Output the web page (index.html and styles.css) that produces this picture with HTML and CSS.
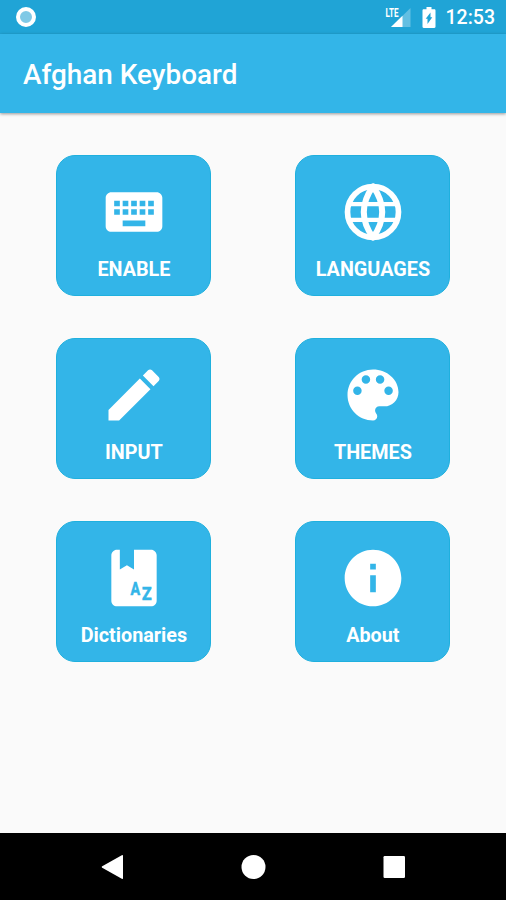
FILE: index.html
```html
<!DOCTYPE html>
<html lang="en">
<head>
    <meta charset="UTF-8">
    <meta name="viewport" content="width=device-width, initial-scale=1.0">
    <title>Afghan Keyboard</title>
    <link rel="stylesheet" href="styles.css">
</head>
<body>
    <!-- Status bar -->
    <div class="status-bar">
        <span class="status-dot"></span>
        <div class="status-right">
            <svg class="signal" width="28" height="24" viewBox="0 0 28 24">
                <path class="faded" d="M26.5 2v19H7z"/>
                <path d="M18.5 9.7V21H7z"/>
                <text x="1.5" y="10.5" textLength="13" lengthAdjust="spacingAndGlyphs">LTE</text>
            </svg>
            <svg class="battery" width="14" height="22" viewBox="0 0 14 22">
                <path d="M4.5 0h5v2.2h2.8c.7 0 1.2.5 1.2 1.2v16.4c0 .7-.5 1.2-1.2 1.2H1.7c-.7 0-1.2-.5-1.2-1.2V3.4c0-.7.5-1.2 1.2-1.2h2.8z"/>
                <path class="bolt" d="M8.5 5.5v4.8h1.8L5.5 17v-5.2H3.7z"/>
            </svg>
            <span class="clock">12:53</span>
        </div>
    </div>

    <header class="app-bar">
        <h1>Afghan Keyboard</h1>
    </header>

    <!-- Menu cards -->
    <main class="menu">
        <a class="card">
            <svg class="icon" viewBox="0 0 24 24">
                <path d="M20 5H4c-1.1 0-1.99.9-1.99 2L2 17c0 1.1.9 2 2 2h16c1.1 0 2-.9 2-2V7c0-1.1-.9-2-2-2zm-9 3h2v2h-2V8zm0 3h2v2h-2v-2zM8 8h2v2H8V8zm0 3h2v2H8v-2zm-1 2H5v-2h2v2zm0-3H5V8h2v2zm9 7H8v-2h8v2zm0-4h-2v-2h2v2zm0-3h-2V8h2v2zm3 3h-2v-2h2v2zm0-3h-2V8h2v2z"/>
            </svg>
            <span class="label">ENABLE</span>
        </a>
        <a class="card">
            <svg class="icon globe" viewBox="0 0 24 24">
                <circle cx="12" cy="12" r="9"/>
                <path class="meridian" d="M12 3Q5.5 12 12 21Q18.5 12 12 3z"/>
                <path d="M3 9.2h18M3 14.8h18"/>
            </svg>
            <span class="label">LANGUAGES</span>
        </a>
        <a class="card">
            <svg class="icon" viewBox="0 0 24 24">
                <path d="M3 17.25V21h3.75L17.81 9.94l-3.75-3.75L3 17.25zM20.71 7.04c.39-.39.39-1.02 0-1.41l-2.34-2.34c-.39-.39-1.02-.39-1.41 0l-1.83 1.83 3.75 3.75 1.83-1.83z"/>
            </svg>
            <span class="label">INPUT</span>
        </a>
        <a class="card">
            <svg class="icon" viewBox="0 0 24 24">
                <path d="M12 3c-4.97 0-9 4.03-9 9s4.03 9 9 9c.83 0 1.5-.67 1.5-1.5 0-.39-.15-.74-.39-1.01-.23-.26-.38-.61-.38-.99 0-.83.67-1.5 1.5-1.5H16c2.76 0 5-2.24 5-5 0-4.42-4.03-8-9-8zm-5.5 9c-.83 0-1.5-.67-1.5-1.5S5.67 9 6.5 9 8 9.67 8 10.5 7.33 12 6.5 12zm3-4C8.67 8 8 7.33 8 6.5S8.67 5 9.5 5s1.5.67 1.5 1.5S10.33 8 9.5 8zm5 0c-.83 0-1.5-.67-1.5-1.5S13.67 5 14.5 5s1.5.67 1.5 1.5S15.33 8 14.5 8zm3 4c-.83 0-1.5-.67-1.5-1.5S16.67 9 17.5 9s1.5.67 1.5 1.5-.67 1.5-1.5 1.5z"/>
            </svg>
            <span class="label">THEMES</span>
        </a>
        <a class="card">
            <svg class="icon" viewBox="0 0 24 24">
                <path d="M6 2h1v7l2.5-1.5L12 9V2h6c1.1 0 2 .9 2 2v16c0 1.1-.9 2-2 2H6c-1.1 0-2-.9-2-2V4c0-1.1.9-2 2-2z"/>
                <text class="letter" x="10.8" y="18" textLength="3.4" lengthAdjust="spacingAndGlyphs">A</text>
                <text class="letter" x="14.8" y="19.9" textLength="3.4" lengthAdjust="spacingAndGlyphs">Z</text>
            </svg>
            <span class="label">Dictionaries</span>
        </a>
        <a class="card">
            <svg class="icon" viewBox="0 0 24 24">
                <path d="M12 2C6.48 2 2 6.48 2 12s4.48 10 10 10 10-4.48 10-10S17.52 2 12 2zm1 15h-2v-6h2v6zm0-8h-2V7h2v2z"/>
            </svg>
            <span class="label">About</span>
        </a>
    </main>

    <!-- Navigation bar -->
    <nav class="nav-bar">
        <svg width="24" height="26" viewBox="0 0 24 26"><path d="M2.2 12.2 21.8 1.2q1.2-.6 1.2.7v22.2q0 1.3-1.2.7L2.2 13.8q-1.2-.8 0-1.6z"/></svg>
        <svg width="24" height="26" viewBox="0 0 24 26"><circle cx="12.5" cy="13" r="12"/></svg>
        <svg width="24" height="26" viewBox="0 0 24 26"><rect x="1.5" y="2" width="21.5" height="22" rx="1.2"/></svg>
    </nav>
</body>
</html>
```

FILE: styles.css
```css
/* General body styling */
body {
    display: flex;
    flex-direction: column;
    height: 900px;
    margin: 0;
    background-color: #fafafa;
    color: #fff;
    font-family: Roboto, sans-serif;
}

svg {
    display: block;
    fill: #fff;
    overflow: visible;
}

/* Status bar */
.status-bar {
    display: flex;
    justify-content: space-between;
    align-items: center;
    box-sizing: border-box;
    height: 34px;
    padding: 0 11px 0 16px;
    background-color: #20a4d6;
}

.status-dot {
    box-sizing: border-box;
    width: 20px;
    height: 20px;
    border: 4px solid #fff;
    border-radius: 50%;
    background-color: #80c9e6;
}

.status-right {
    display: flex;
    align-items: center;
    padding-top: 1px;
}

.signal {
    margin-right: 10px;
}

.signal text {
    font-size: 12.5px;
    font-weight: 700;
}

.faded {
    fill: #63bfe2;
}

.bolt {
    fill: #20a4d6;
}

.clock {
    margin-left: 10px;
    font-size: 19.5px;
    font-weight: 500;
    line-height: 34px;
}

/* Header */
.app-bar {
    display: flex;
    align-items: center;
    height: 79px;
    padding: 0 23px;
    background-color: #33b5e8;
    box-shadow: 0 1px 3px rgba(0, 0, 0, 0.4);
}

h1 {
    margin: 0;
    padding-top: 2px;
    font-size: 27.9px;
    font-weight: 500;
}

/* Card grid */
.menu {
    display: grid;
    grid-template-columns: 155px 155px;
    grid-auto-rows: 141px;
    column-gap: 84px;
    row-gap: 42px;
    flex: 1;
    padding: 42px 0 0 56.4px;
}

.card {
    display: flex;
    flex-direction: column;
    align-items: center;
    box-sizing: border-box;
    padding-top: 22px;
    border: 1px solid #1fb0de;
    border-radius: 19px;
    background-color: #33b5e8;
}

.icon {
    width: 68px;
    height: 68px;
}

.globe {
    fill: none;
    stroke: #fff;
    stroke-width: 2;
}

.globe path {
    stroke-width: 1.5;
}

.globe .meridian {
    stroke-width: 2.1;
    stroke-linejoin: round;
}

.letter {
    fill: #33b5e8;
    stroke: #33b5e8;
    stroke-width: 0.2;
    font-size: 6.8px;
    font-weight: 700;
}

.label {
    margin-top: 12px;
    font-size: 19.8px;
    font-weight: 700;
    line-height: 23px;
}

/* Navigation bar */
.nav-bar {
    display: flex;
    justify-content: center;
    align-items: center;
    gap: 117px;
    height: 67px;
    background-color: #000;
}
```
